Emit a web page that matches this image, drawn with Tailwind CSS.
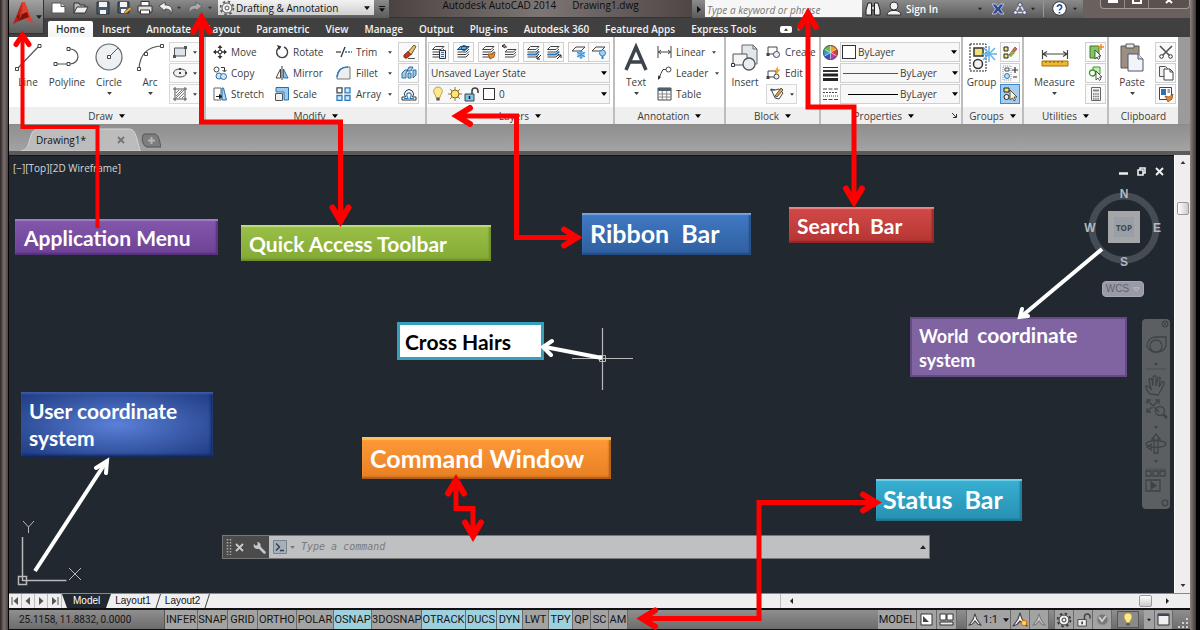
<!DOCTYPE html>
<html lang="en">
<head>
  <meta charset="UTF-8" />
  <meta name="viewport" content="width=device-width, initial-scale=1" />
  <title>Autodesk AutoCAD 2014 - Drawing1.dwg</title>
  <script src="https://cdn.jsdelivr.net/npm/@tailwindcss/browser@4"></script>
</head>
<body class="bg-black text-[#3c3c3c] font-['Open_Sans',sans-serif] text-[10px] leading-4 overflow-hidden">

  <!-- Shared icons -->
  <svg class="hidden">
    <symbol id="caret" viewBox="0 0 8 5"><path d="M0 0h8L4 5z" fill="currentColor" /></symbol>
    <symbol id="stack" viewBox="0 0 16 16"><path d="M4.500 2.500h8.500l-3 3H1.500zM1.500 8h8.500l3-3M1.500 10.500h8.500l3-3M1.500 13h8.500l3-3" fill="none" stroke="currentColor" /></symbol>
    <symbol id="gear" viewBox="0 0 16 16"><circle cx="8" cy="8" r="6.500" fill="none" stroke="currentColor" stroke-width="1.600" stroke-dasharray="2.500 2.600" /><circle cx="8" cy="8" r="5" fill="#f4f4f4" stroke="currentColor" /><circle cx="8" cy="8" r="2" fill="none" stroke="currentColor" /></symbol>
    <symbol id="bulb" viewBox="0 0 12 16"><path d="M6 1a4.300 4.300 0 0 0-4.300 4.300C1.700 8 4 9 4 11.500h4C8 9 10.300 8 10.300 5.300A4.300 4.300 0 0 0 6 1z" fill="#ffe98a" stroke="#a08a3a" stroke-width=".8" /><path d="M4.300 12h3.400v2.500H4.300z" fill="#555" /></symbol>
    <symbol id="lock" viewBox="0 0 16 16"><path d="M9 8V5a3 3 0 0 1 6 0v2" fill="none" stroke="#444" stroke-width="1.600" /><path d="M2 8h9v7H2z" fill="var(--lock,#7cc4ea)" stroke="#444" /><path d="M6.500 10v3" stroke="#222" stroke-width="1.500" /></symbol>
    <symbol id="scaler" viewBox="0 0 16 16"><path d="M8 1l2 6 5 7-4-1.500L8 9l-3 3.500L1 14l5-7z" fill="#fff" stroke="#444" stroke-width="1.200" stroke-linejoin="round" /></symbol>
  </svg>

  <div class="relative min-h-screen flex overflow-hidden">
    <!-- Window frame, left -->
    <div class="w-[9px] shrink-0 border-r border-black bg-linear-to-r from-[#2b2626] via-[#7b706e] to-[#4c4342]"></div>

    <div class="flex-1 min-w-0 flex flex-col">
      <div class="relative">
        <!-- Title bar -->
        <header class="h-[18px] flex bg-linear-to-b from-[#8b8b8b] to-[#5b5b5b] text-white">
          <nav class="flex items-center pl-[42px] w-[209px] h-4 shrink-0">
            <button aria-label="New" class="w-[19px]"><svg class="w-4 h-4" viewBox="0 0 16 16"><path d="M1 3h9l4 3.500V13H1z" fill="#fff" stroke="#555" /><path d="M10 3v3.500h4" fill="#ccc" stroke="#555" /></svg></button>
            <button aria-label="Open" class="w-[22px]"><svg class="w-4 h-4 mx-auto" viewBox="0 0 16 16"><path d="M1 13V3h5l1 2h5v2" fill="#bbb" stroke="#333" /><path d="M1 13l3-6h11l-3 6z" fill="#eee" stroke="#333" /></svg></button>
            <button aria-label="Save" class="w-[21px]"><svg class="w-4 h-4 mx-auto" viewBox="0 0 16 16"><path d="M2 2h12v12H2z" fill="#4a586c" stroke="#26303d" /><path d="M4 2h8v5H4zM5 10h6v4H5z" fill="#f4f4f4" /></svg></button>
            <button aria-label="Save As" class="w-[21px]"><svg class="w-4 h-4 mx-auto" viewBox="0 0 16 16"><path d="M2 2h11v11H2z" fill="#4a586c" stroke="#26303d" /><path d="M4 2h7v5H4zM5 9h5v4H5z" fill="#f4f4f4" /><path d="M8 14l1-3 5-4 1.500 2-5 4z" fill="#f0b040" stroke="#7a4a10" stroke-width=".7" /></svg></button>
            <button aria-label="Plot" class="w-[21px]"><svg class="w-4 h-4 mx-auto" viewBox="0 0 16 16"><path d="M4 1.500h8V6H4z" fill="#fff" stroke="#333" /><path d="M1 6h14v6H1z" fill="#ddd" stroke="#333" /><path d="M3.500 10h9v4h-9z" fill="#fff" stroke="#333" /></svg></button>
            <button aria-label="Undo" class="w-[22px]"><svg class="w-4 h-4 mx-auto" viewBox="0 0 16 16"><path d="M1 6l6-4v3c5 0 7 2 7 6 0 1-.3 2-1 3 0-4-2-5-6-5v2z" fill="#eee" stroke="#333" stroke-width=".7" /></svg></button>
            <svg class="w-1 h-1 text-[#333]"><use href="#caret" /></svg>
            <button aria-label="Redo" class="w-[27px]"><svg class="w-4 h-4 mx-auto" viewBox="0 0 16 16"><path d="M15 6L9 2v3c-5 0-7 2-7 6 0 1 .3 2 1 3 0-4 2-5 6-5v2z" fill="#aaa" stroke="#555" stroke-width=".7" /></svg></button>
            <svg class="w-1 h-1 text-[#333]"><use href="#caret" /></svg>
          </nav>
          <div class="relative flex items-center w-[156px] h-4 shrink-0 bg-linear-to-b from-[#f2f2f2] to-[#cfcfcf] border-b border-[#666] text-[#111]">
            <svg class="w-4 h-4 ml-px mr-px text-[#555] shrink-0"><use href="#gear" /></svg>
            <select aria-label="Workspace" class="appearance-none flex-1 h-4 bg-transparent outline-none"><option>Drafting &amp; Annotation</option></select>
            <svg class="absolute right-1 w-[6px] h-1 pointer-events-none"><use href="#caret" /></svg>
          </div>
          <button aria-label="Customize toolbar" class="w-[15px] shrink-0 flex flex-col items-center justify-center gap-px text-[#111]"><span class="w-[6px] h-px bg-[#111]"></span><svg class="w-[6px] h-1"><use href="#caret" /></svg></button>
          <div class="flex-1 bg-linear-to-r from-[#4a4342] via-[#7d7674] to-[#4f4745] text-[#0c0c0c] leading-[11px] flex justify-center gap-4 border-b border-[#383230]">
            <span>Autodesk AutoCAD 2014</span><span>Drawing1.dwg</span>
          </div>
          <button aria-label="Collapse search" class="w-[13px] shrink-0 flex items-center justify-center text-[#111]"><svg class="w-1 h-[7px]" viewBox="0 0 4 7"><path d="M0 0v7l4-3.500z" fill="currentColor" /></svg></button>
          <input aria-label="Search" type="text" placeholder="Type a keyword or phrase" class="w-[157px] shrink-0 h-[17px] bg-[#f6f6f6] px-[2px] pt-[3px] italic outline-none placeholder:text-[#777]" />
          <div class="flex items-center w-[221px] shrink-0 pl-[3px] h-[17px]">
            <button aria-label="Find" class="w-4"><svg class="w-4 h-4" viewBox="0 0 16 16"><path d="M3 2h3.500v12H1V9zM9.500 2H13l2 7v5H9.500z" fill="#f0f0f0" stroke="#222" /><path d="M6.500 5h3v4h-3z" fill="#ccc" stroke="#222" /></svg></button>
            <button class="flex items-center gap-1 ml-[5px] font-semibold"><svg class="w-4 h-4" viewBox="0 0 16 16"><circle cx="8" cy="5" r="4" fill="#f2f2f2" stroke="#333" /><path d="M1 14c0-3 3-4 5-4.500h4c2 .5 5 1.500 5 4.500z" fill="#f2f2f2" stroke="#333" /></svg>Sign In</button>
            <svg class="w-1 h-1 ml-auto mr-[9px] text-[#222]"><use href="#caret" /></svg>
            <button aria-label="Exchange"><svg class="w-[14px] h-[14px]" viewBox="0 0 14 14"><path d="M1 2h4l2 3 2-3h4L9.500 7 13 12H9L7 9l-2 3H1l3.500-5z" fill="#2f4796" stroke="#cfd6ee" stroke-width=".8" /></svg></button>
            <button aria-label="Autodesk 360" class="ml-2"><svg class="w-[14px] h-[14px]" viewBox="0 0 14 14"><path d="M7 2.500L2.500 10.500h9z" fill="none" stroke="#dfe4f2" stroke-width="1.600" /><g fill="#dfe4f2" stroke="#34406c" stroke-width=".8"><circle cx="7" cy="2.700" r="2" /><circle cx="2.500" cy="10.500" r="2" /><circle cx="11.500" cy="10.500" r="2" /></g></svg></button>
            <svg class="w-1 h-1 ml-1 text-[#222]"><use href="#caret" /></svg>
            <span class="w-px h-4 bg-[#999] mx-2"></span>
            <button aria-label="Help"><svg class="w-[15px] h-[15px]" viewBox="0 0 15 15"><circle cx="7.500" cy="7.500" r="6.800" fill="#fff" stroke="#333" /><path d="M5.300 6a2.200 2.200 0 1 1 3.200 2c-.8.400-1 .8-1 1.500M7.500 11v1.400" fill="none" stroke="#2752a8" stroke-width="1.700" /></svg></button>
            <svg class="w-1 h-1 mx-[6px] text-[#222]"><use href="#caret" /></svg>
          </div>
          <div class="w-[107px] shrink-0 bg-[#6a605d] flex justify-end">
            <div class="flex w-[90px] h-[9px] rounded-b-[4px] border border-t-0 border-[#a39a97] bg-[#5b5250]">
              <button aria-label="Minimize" class="flex-1 flex justify-center"><span class="w-[10px] h-[3px] bg-white"></span></button>
              <button aria-label="Maximize" class="flex-1 flex justify-center border-x border-[#958c89]"><span class="w-[10px] h-1 border-2 border-t-0 border-white"></span></button>
              <button aria-label="Close" class="w-10 flex justify-center"><svg class="w-[10px] h-1" viewBox="0 0 10 4"><path d="M5 0l3 3M5 0L2 3" stroke="#fff" stroke-width="2" /></svg></button>
            </div>
          </div>
        </header>

        <!-- Ribbon tabs -->
        <nav class="h-[19px] bg-[#404040] flex items-end pl-[39px] text-[#f2f2f2] font-semibold">
          <a href="#home" class="h-4 px-2 mr-px bg-linear-to-b from-white to-[#f4f4f4] text-[#333] rounded-t-[2px]">Home</a>
          <a href="#insert" class="h-4 px-2">Insert</a>
          <a href="#annotate" class="h-4 px-2">Annotate</a>
          <a href="#layout" class="h-4 px-2">Layout</a>
          <a href="#parametric" class="h-4 px-2">Parametric</a>
          <a href="#view" class="h-4 px-2">View</a>
          <a href="#manage" class="h-4 px-2">Manage</a>
          <a href="#output" class="h-4 px-2">Output</a>
          <a href="#plugins" class="h-4 px-2">Plug-ins</a>
          <a href="#a360" class="h-4 px-2">Autodesk 360</a>
          <a href="#featured" class="h-4 px-2">Featured Apps</a>
          <a href="#express" class="h-4 px-2">Express Tools</a>
          <button aria-label="Minimize ribbon" class="h-4 ml-4 flex items-center gap-[5px]"><span class="w-3 h-[7px] rounded-[2px] bg-white text-[#222] flex items-center justify-center"><svg class="w-1 h-[3px] rotate-180"><use href="#caret" /></svg></span><svg class="w-1 h-[3px]"><use href="#caret" /></svg></button>
        </nav>

        <!-- Application button -->
        <button aria-label="Application menu" class="absolute left-0 top-0 w-[35px] h-[34px] bg-linear-to-b from-[#a2a2a2] to-[#5c5c5c] border-r border-b border-[#333] flex items-center gap-[2px] pl-[3px] text-[#222]">
          <svg class="w-[22px] h-6 -mt-2 shrink-0" viewBox="0 0 22 24"><path d="M10 1L1 23l6-3 3-6z" fill="#b02318" /><path d="M10 1h3l8 21-6-2-5-12z" fill="#e0402c" /><path d="M5 15l10-4 2 5-10 4z" fill="#7c130c" /><path d="M10 1l1 10-4 9z" fill="#d5301f" /></svg>
          <svg class="w-[6px] h-1"><use href="#caret" /></svg>
        </button>
      </div>

      <!-- Ribbon panels -->
      <section class="h-[88px] flex bg-[#9b9b9b] border-b border-[#8b8b8b]">
        <!-- Draw -->
        <div class="w-[197px] shrink-0 flex flex-col bg-white border-r-2 border-[#bdbdbd]">
          <div class="flex-1 flex pt-[5px]">
            <button class="w-[38px] flex flex-col items-center"><svg class="w-[30px] h-8" viewBox="0 0 30 32"><path d="M4 27L26 4" stroke="#555" stroke-width="1.200" /><path d="M2.500 25.500h3v3h-3zM25 2.500h3v3h-3z" fill="#fff" stroke="#444" /></svg>Line</button>
            <button class="w-10 flex flex-col items-center"><svg class="w-[30px] h-8" viewBox="0 0 30 32"><path d="M3 22h15a8 7.500 0 0 0 0-15h-1" fill="none" stroke="#555" stroke-width="1.200" /><path d="M2 20.500h3v3H2zM15 20.500h3v3h-3zM15 5.500h3v3h-3z" fill="#fff" stroke="#444" /></svg>Polyline</button>
            <button class="w-11 flex flex-col items-center"><svg class="w-[30px] h-8" viewBox="0 0 30 32"><circle cx="15" cy="15" r="13" fill="#eef1f4" stroke="#666" stroke-width="1.200" /><path d="M15 15l9-9" stroke="#555" /><path d="M13.500 13.500h3v3h-3z" fill="#fff" stroke="#444" /></svg>Circle<svg class="w-[5px] h-[3px] mt-[2px]"><use href="#caret" /></svg></button>
            <button class="w-[38px] flex flex-col items-center"><svg class="w-[30px] h-8" viewBox="0 0 30 32"><path d="M4 27Q5 5 27 4" fill="none" stroke="#555" stroke-width="1.200" /><path d="M2.500 25.500h3v3h-3zM9.500 10.500h3v3h-3zM25.500 2.500h3v3h-3z" fill="#fff" stroke="#444" /></svg>Arc<svg class="w-[5px] h-[3px] mt-[2px]"><use href="#caret" /></svg></button>
            <div class="flex flex-col gap-px">
              <button aria-label="Rectangle" class="w-[31px] h-5 border border-[#d8d8d8] bg-[#fafafa] flex items-center gap-[5px] pl-[2px]"><svg class="w-4 h-4" viewBox="0 0 16 16"><path d="M2.500 4h11v8h-11z" fill="#dde3ea" stroke="#555" /><path d="M1 11h3v3H1zM12 2h3v3h-3z" fill="#555" /></svg><svg class="w-1 h-[3px]"><use href="#caret" /></svg></button>
              <button aria-label="Ellipse" class="w-[31px] h-5 border border-[#d8d8d8] bg-[#fafafa] flex items-center gap-[5px] pl-[2px]"><svg class="w-4 h-4" viewBox="0 0 16 16"><ellipse cx="8" cy="8" rx="6.500" ry="4" fill="#f0f0f0" stroke="#444" /><path d="M7 7h2v2H7zM7 3h2v2H7zM13 7h2v2h-2z" fill="#444" /></svg><svg class="w-1 h-[3px]"><use href="#caret" /></svg></button>
              <button aria-label="Hatch" class="w-[31px] h-5 border border-[#d8d8d8] bg-[#fafafa] flex items-center gap-[5px] pl-[2px]"><svg class="w-4 h-4" viewBox="0 0 16 16"><path d="M3 1v14M13 1v14M1 3h14M1 13h14" stroke="#555" /><path d="M4 7l3-3M4 10l6-6M4 12l8-8M7 12l5-5M10 12l2-2" stroke="#666" stroke-width=".9" /></svg><svg class="w-1 h-[3px]"><use href="#caret" /></svg></button>
            </div>
          </div>
          <button class="h-[17px] bg-[#efefef] flex items-center justify-center gap-[6px]">Draw <svg class="w-[6px] h-1 text-black"><use href="#caret" /></svg></button>
        </div>

        <!-- Modify -->
        <div class="w-[221px] shrink-0 flex flex-col bg-white border-r-2 border-[#bdbdbd]">
          <div class="flex-1 flex pt-[5px] pl-[7px]">
            <div class="w-[62px] flex flex-col gap-px">
              <button class="h-5 flex items-center gap-1"><svg class="w-[14px] h-[14px]" viewBox="0 0 14 14"><path d="M7 1v4M7 9v4M1 7h4M9 7h4" stroke="#333" stroke-width="1.300" /><path d="M7 0l2.500 3h-5zM7 14l2.500-3h-5zM0 7l3-2.500v5zM14 7l-3-2.500v5z" fill="#333" /><path d="M5.500 5.500h3v3h-3z" fill="#fff" stroke="#444" /></svg>Move</button>
              <button class="h-5 flex items-center gap-1"><svg class="w-[14px] h-[14px]" viewBox="0 0 14 14"><circle cx="3.500" cy="3.500" r="2.500" fill="#fff" stroke="#444" /><circle cx="6" cy="10" r="3" fill="#cfe6f8" stroke="#2a6ea8" /><circle cx="10.500" cy="10.500" r="3" fill="#cfe6f8" stroke="#2a6ea8" /><path d="M8 1.500h3.500V5M9.500 4l2 2 2-2" fill="none" stroke="#333" /></svg>Copy</button>
              <button class="h-5 flex items-center gap-1"><svg class="w-[14px] h-[14px]" viewBox="0 0 14 14"><path d="M9 1h1.500l3 12H9z" fill="#a9d4f2" stroke="#2a6ea8" /><path d="M1 1h7v12H1z" fill="#fff" stroke="#666" /><path d="M3 9.500h4M6.500 7.500l2.500 2-2.500 2z" fill="#222" stroke="#222" /></svg>Stretch</button>
            </div>
            <div class="w-[61px] flex flex-col gap-px">
              <button class="h-5 flex items-center gap-1"><svg class="w-[14px] h-[14px]" viewBox="0 0 14 14"><path d="M4.500 2.300A5.500 5.500 0 1 0 9 2" fill="none" stroke="#444" stroke-width="1.400" /><path d="M2 0l4.500 1.500L4 5z" fill="#333" /></svg>Rotate</button>
              <button class="h-5 flex items-center gap-1"><svg class="w-[14px] h-[14px]" viewBox="0 0 14 14"><path d="M5.500 3v9H1z" fill="#fff" stroke="#444" /><path d="M8.500 3v9H13z" fill="#8fc4ec" stroke="#2a6ea8" /><path d="M7 0v14" stroke="#333" /></svg>Mirror</button>
              <button class="h-5 flex items-center gap-1"><svg class="w-[14px] h-[14px]" viewBox="0 0 14 14"><path d="M1 .5h12.500V13H9V5H1z" fill="#9acbee" stroke="#2a6ea8" /><path d="M.5 6.500h7v7h-7z" fill="#eee" stroke="#555" /></svg>Scale</button>
            </div>
            <div class="w-[62px] flex flex-col gap-px">
              <button class="h-5 flex items-center gap-1"><svg class="w-4 h-[14px]" viewBox="0 0 16 14"><path d="M0 7h5" stroke="#444" stroke-width="1.300" /><path d="M9 2L5 12" stroke="#333" stroke-width="1.300" /><path d="M9 7h7" stroke="#2a6ea8" stroke-width="1.300" stroke-dasharray="2 1" /></svg>Trim<svg class="w-1 h-[3px] ml-auto mr-[6px]"><use href="#caret" /></svg></button>
              <button class="h-5 flex items-center gap-1"><svg class="w-4 h-[14px]" viewBox="0 0 16 14"><path d="M1 13V10Q2 1 12 1h2v12z" fill="#eee" stroke="#777" /><path d="M1 11Q2 1 12 1" fill="none" stroke="#2a7bc0" stroke-width="1.600" /></svg>Fillet<svg class="w-1 h-[3px] ml-auto mr-[6px]"><use href="#caret" /></svg></button>
              <button class="h-5 flex items-center gap-1"><svg class="w-4 h-[14px]" viewBox="0 0 16 14"><path d="M1 .8h5v5H1z" fill="#fff" stroke="#444" stroke-width="1.300" /><path d="M9 .8h5v5H9zM1 8.500h5v5H1zM9 8.500h5v5H9z" fill="#d3e9f9" stroke="#2a7bc0" stroke-width="1.300" /></svg>Array<svg class="w-1 h-[3px] ml-auto mr-[6px]"><use href="#caret" /></svg></button>
            </div>
            <div class="flex flex-col gap-px">
              <button aria-label="Erase" class="w-[21px] h-5 border border-[#d0d0d0] bg-[#fafafa] flex items-center justify-center"><svg class="w-4 h-4" viewBox="0 0 16 16"><path d="M7 8l6-7 2 1.500L10 11z" fill="#f3c064" stroke="#333" stroke-width=".8" /><path d="M3 11l4-3.500 3 3L6 14c-2 1-4-1-3-3z" fill="#c2391f" stroke="#5b1608" stroke-width=".7" /><path d="M7 14.500h7" stroke="#555" /></svg></button>
              <button aria-label="Explode" class="w-[21px] h-5 border border-[#d0d0d0] bg-[#fafafa] flex items-center justify-center"><svg class="w-4 h-4" viewBox="0 0 16 16"><g fill="#9ccdf0" stroke="#22628f" stroke-width=".9"><path d="M1 8l3-3h3L5 8v5H1zM6 6l2-4h4L10 6zM7 8h3v5H7zM12 5h3v5l-3 3z" /></g></svg></button>
              <button aria-label="Offset" class="w-[21px] h-5 border border-[#d0d0d0] bg-[#fafafa] flex items-center justify-center"><svg class="w-4 h-4" viewBox="0 0 16 16"><path d="M1 14h14v-3h-3.500a4.500 4.500 0 1 0-7 0H1z" fill="#fff" stroke="#333" /><path d="M3 12.500h4c0-1-1.500-2-1.200-3.500a2.200 2.200 0 0 1 4.400 0c.3 1.500-1.200 2.500-1.200 3.500h4" fill="none" stroke="#2a7bc0" stroke-width="1.200" /></svg></button>
            </div>
          </div>
          <button class="h-[17px] bg-[#efefef] flex items-center justify-center gap-[6px]">Modify <svg class="w-[6px] h-1 text-black"><use href="#caret" /></svg></button>
        </div>

        <!-- Layers -->
        <div class="w-[188px] shrink-0 flex flex-col bg-white border-r-2 border-[#bdbdbd]">
          <div class="flex-1 flex flex-col gap-px pt-[5px] pl-px pr-[3px]">
            <div class="flex justify-between h-5 text-[#444]">
              <button aria-label="Layer properties" class="w-[21px] border border-[#d0d0d0] bg-[#fafafa] flex items-center justify-center"><svg class="w-4 h-4" viewBox="0 0 16 16"><use href="#stack" /><path d="M8.500 6.500h6v8h-6z" fill="#e8eef4" stroke="#333" /><path d="M10 8.500h3M10 10.500h3M10 12.500h3" stroke="#2a6ea8" /></svg></button>
              <button aria-label="Make current" class="w-[21px] border border-[#d0d0d0] bg-[#fafafa] flex items-center justify-center"><svg class="w-4 h-4" viewBox="0 0 16 16"><use href="#stack" /><path d="M4.500 2.500H13l-3 3H1.500z" fill="#62aee4" stroke="#1d4d75" /><circle cx="8" cy="4" r="2.500" fill="none" stroke="#1d4d75" /></svg></button>
              <div class="flex">
                <button aria-label="Match layer" class="w-[21px] border border-[#d0d0d0] bg-[#fafafa] flex items-center justify-center"><svg class="w-4 h-4" viewBox="0 0 16 16"><use href="#stack" /><path d="M7 10h4l3-2-1 5-4 2z" fill="#e48a2c" stroke="#8a4510" stroke-width=".8" /></svg></button>
                <button aria-label="Previous layer" class="w-5 border border-l-0 border-[#d0d0d0] bg-[#fafafa] flex items-center justify-center"><svg class="w-4 h-4" viewBox="0 0 16 16"><path d="M1 2h4v2M1 2l3-2M1 2l3 2" fill="none" stroke="#222" /><path d="M6.500 5.500H15l-2.500 2.500H4zM4 10.500h8.500L15 8M4 13h8.500l2.500-2.500" fill="none" stroke="#444" /></svg></button>
              </div>
              <div class="flex">
                <button aria-label="Isolate" class="w-[21px] border border-[#d0d0d0] bg-[#fafafa] flex items-center justify-center"><svg class="w-4 h-4" viewBox="0 0 16 16"><use href="#stack" /><path d="M1.500 10.500h8.500l3-3" stroke="#2a7bc0" stroke-width="1.800" fill="none" /><path d="M15 11l-4 4M11 12v3h3" stroke="#222" fill="none" /></svg></button>
                <button aria-label="Unisolate" class="w-5 border border-l-0 border-[#d0d0d0] bg-[#fafafa] flex items-center justify-center"><svg class="w-4 h-4" viewBox="0 0 16 16"><use href="#stack" /><path d="M1.500 10.500h8.500l3-3" stroke="#2a7bc0" stroke-width="1.800" fill="none" /><path d="M11 15l4-4M12 11h3v3" stroke="#222" fill="none" /></svg></button>
              </div>
              <div class="flex">
                <button aria-label="Freeze" class="w-[21px] border border-[#d0d0d0] bg-[#fafafa] flex items-center justify-center"><svg class="w-4 h-4" viewBox="0 0 16 16"><path d="M5 3h9l-4 4H1z" fill="none" stroke="#444" /><path d="M10 6v9M6 8.300l8 4.500M14 8.300l-8 4.500" stroke="#3b95d8" stroke-width="1.200" /><circle cx="10" cy="10.500" r="3" fill="none" stroke="#3b95d8" /></svg></button>
                <button aria-label="Layer off" class="w-[21px] border border-l-0 border-[#d0d0d0] bg-[#fafafa] flex items-center justify-center"><svg class="w-4 h-4" viewBox="0 0 16 16"><path d="M5 3h9l-4 4H1z" fill="none" stroke="#444" /><circle cx="11.500" cy="9" r="3" fill="#9fd0f2" stroke="#3b7fb5" /><path d="M10.500 12h2v3h-2z" fill="#3b7fb5" /></svg></button>
              </div>
            </div>
            <div class="relative flex items-center h-5 border border-[#cfcfcf] bg-[#f7f7f7]">
              <select aria-label="Layer state" class="appearance-none flex-1 bg-transparent pl-[2px] outline-none"><option>Unsaved Layer State</option></select>
              <svg class="absolute right-[2px] w-[6px] h-1 text-black pointer-events-none"><use href="#caret" /></svg>
            </div>
            <div class="relative flex items-center h-5 border border-[#cfcfcf] bg-[#f7f7f7]">
              <svg class="w-3 h-4 ml-[3px]"><use href="#bulb" /></svg>
              <svg class="w-4 h-4 ml-[3px]" viewBox="0 0 16 16"><path d="M8 1v14M1 8h14M3 3l10 10M13 3L3 13" stroke="#a07d28" /><circle cx="8" cy="8" r="4" fill="#ffe27a" stroke="#8a6a1a" /></svg>
              <svg class="w-4 h-4"><use href="#lock" /></svg>
              <span class="w-3 h-3 ml-1 mr-1 border border-[#333] bg-white"></span>
              <select aria-label="Layer" class="appearance-none flex-1 bg-transparent outline-none"><option>0</option></select>
              <svg class="absolute right-[2px] w-[6px] h-1 text-black pointer-events-none"><use href="#caret" /></svg>
            </div>
          </div>
          <button class="h-[17px] bg-[#efefef] flex items-center justify-center gap-[6px]">Layers <svg class="w-[6px] h-1 text-black"><use href="#caret" /></svg></button>
        </div>

        <!-- Annotation -->
        <div class="w-[111px] shrink-0 flex flex-col bg-white border-r-2 border-[#bdbdbd]">
          <div class="flex-1 flex pt-[5px]">
            <button class="w-[42px] flex flex-col items-center"><svg class="w-6 h-8" viewBox="0 0 24 32"><path d="M2 28L12 5l10 23M6 20h12" fill="none" stroke="#3e444c" stroke-width="3.500" /></svg>Text<svg class="w-[5px] h-[3px] mt-[2px]"><use href="#caret" /></svg></button>
            <div class="flex-1 flex flex-col gap-px">
              <button class="h-5 flex items-center gap-1"><svg class="w-[15px] h-[14px]" viewBox="0 0 15 14"><path d="M1 1v12M14 1v12M1 7h13M4 5L1.500 7 4 9M11 5l2.500 2L11 9" fill="none" stroke="#444" /></svg>Linear<svg class="w-1 h-[3px] ml-auto mr-2"><use href="#caret" /></svg></button>
              <button class="h-5 flex items-center gap-1"><svg class="w-[15px] h-[14px]" viewBox="0 0 15 14"><circle cx="11.500" cy="3.500" r="2.500" fill="#fff" stroke="#444" /><path d="M9 3.500H6Q4 7 1.500 13" fill="none" stroke="#444" /><path d="M1 14l.3-4.500L4 11z" fill="#222" /></svg>Leader<svg class="w-1 h-[3px] ml-auto mr-[5px]"><use href="#caret" /></svg></button>
              <button class="h-5 flex items-center gap-1"><svg class="w-[15px] h-[14px]" viewBox="0 0 15 14"><path d="M1 1h13v12H1z" fill="#fff" stroke="#444" /><path d="M1 1h13v3H1z" fill="#51606f" /><path d="M5.300 4v9M9.700 4v9M1 7h13M1 10h13" stroke="#888" /></svg>Table</button>
            </div>
          </div>
          <button class="h-[17px] bg-[#efefef] flex items-center justify-center gap-[6px]">Annotation <svg class="w-[6px] h-1 text-black"><use href="#caret" /></svg></button>
        </div>

        <!-- Block -->
        <div class="w-[95px] shrink-0 flex flex-col bg-white border-r-2 border-[#bdbdbd]">
          <div class="flex-1 flex pt-[5px]">
            <button class="w-[38px] flex flex-col items-center"><svg class="w-7 h-8" viewBox="0 0 28 32"><path d="M11 3h11l4 4v15H11z" fill="#e2e7ec" stroke="#666" /><path d="M22 3v4h4" fill="none" stroke="#666" /><path d="M2 12h14v11H2z" fill="#f3f5f7" stroke="#555" /><circle cx="18" cy="22" r="6" fill="#e8edf2" stroke="#555" stroke-width="1.300" /><path d="M.5 21.500h3v3h-3z" fill="#fff" stroke="#333" /></svg>Insert</button>
            <div class="flex flex-col gap-px pl-[2px]">
              <button class="h-5 flex items-center gap-1"><svg class="w-[15px] h-[14px]" viewBox="0 0 15 14"><path d="M2 2h9v7H2z" fill="#fff" stroke="#444" /><circle cx="10.500" cy="9.500" r="3" fill="#eef" stroke="#444" /><path d="M.5 8h3v3h-3z" fill="#444" /></svg>Create</button>
              <button class="h-5 flex items-center gap-1"><svg class="w-[15px] h-[14px]" viewBox="0 0 15 14"><path d="M2 5h8v6H2z" fill="#fff" stroke="#444" /><circle cx="10.500" cy="10.500" r="2.500" fill="#eef" stroke="#444" /><path d="M.5 10h3v3h-3z" fill="#444" /><path d="M12 0L8.500 5H11l-1 4 4.500-5.500H12z" fill="#f6a623" /></svg>Edit</button>
              <button aria-label="Edit attributes" class="w-[31px] h-5 border border-[#d8d8d8] bg-[#fafafa] flex items-center gap-[5px] pl-[2px]"><svg class="w-4 h-4" viewBox="0 0 16 16"><path d="M2 3l4 9 4 1 4-6-4-4-4 1z" fill="#fff" stroke="#444" /><path d="M1 4h5" stroke="#444" /><path d="M6 10l6-8 2 2-6 7z" fill="#f2a33c" stroke="#333" stroke-width=".8" /></svg><svg class="w-1 h-[3px]"><use href="#caret" /></svg></button>
            </div>
          </div>
          <button class="h-[17px] bg-[#efefef] flex items-center justify-center gap-[6px]">Block <svg class="w-[6px] h-1 text-black"><use href="#caret" /></svg></button>
        </div>

        <!-- Properties -->
        <div class="w-[142px] shrink-0 flex flex-col bg-white border-r-2 border-[#bdbdbd]">
          <div class="flex-1 flex flex-col gap-px pt-[5px] pl-[2px] pr-px">
            <div class="h-5 flex items-center gap-[2px]">
              <svg class="w-[15px] h-[15px]" viewBox="0 0 16 16"><g stroke="#fff" stroke-width=".4"><path d="M8 8V0a8 8 0 0 1 7 4z" fill="#f0a030" /><path d="M8 8l7-4a8 8 0 0 1 0 8z" fill="#e2402e" /><path d="M8 8l7 4a8 8 0 0 1-7 4z" fill="#b13bb0" /><path d="M8 8v8a8 8 0 0 1-7-4z" fill="#3b4fc8" /><path d="M8 8l-7 4a8 8 0 0 1 0-8z" fill="#2ba3c4" /><path d="M8 8L1 4a8 8 0 0 1 7-4z" fill="#6cbb3c" /></g><circle cx="8" cy="8" r="7.500" fill="none" stroke="#444" /></svg>
              <div class="relative flex-1 h-full flex items-center border border-[#cfcfcf] bg-[#f7f7f7]"><span class="w-[14px] h-[14px] ml-px mr-[2px] border border-[#333] bg-white"></span><select aria-label="Object color" class="appearance-none flex-1 bg-transparent outline-none"><option>ByLayer</option></select><svg class="absolute right-[2px] w-[6px] h-1 text-black pointer-events-none"><use href="#caret" /></svg></div>
            </div>
            <div class="h-5 flex items-center gap-[2px]">
              <svg class="w-[15px] h-[15px]" viewBox="0 0 15 15"><path d="M0 1.500h15" stroke="#333" /><path d="M0 5h15" stroke="#333" stroke-width="2" /><path d="M0 9h15M0 13.500h15" stroke="#222" stroke-width="3" /></svg>
              <div class="relative flex-1 h-full flex items-center border border-[#cfcfcf] bg-[#f7f7f7]"><span class="flex-1 h-px ml-[2px] mr-[2px] bg-[#555]"></span><select aria-label="Lineweight" class="appearance-none w-[59px] bg-transparent outline-none"><option>ByLayer</option></select><svg class="absolute right-px w-[6px] h-1 text-black pointer-events-none"><use href="#caret" /></svg></div>
            </div>
            <div class="h-5 flex items-center gap-[2px]">
              <svg class="w-[15px] h-[15px]" viewBox="0 0 15 15"><path d="M0 2h15M0 12.500h15" stroke="#444" stroke-dasharray="4 1.500" /><path d="M0 5.500h15" stroke="#444" stroke-dasharray="2 1" /><path d="M0 9h15" stroke="#444" stroke-dasharray="1 1" /></svg>
              <div class="relative flex-1 h-full flex items-center border border-[#cfcfcf] bg-[#f7f7f7]"><span class="flex-1 h-px ml-[7px] mr-[2px] bg-black"></span><select aria-label="Linetype" class="appearance-none w-[59px] bg-transparent outline-none"><option>ByLayer</option></select><svg class="absolute right-px w-[6px] h-1 text-black pointer-events-none"><use href="#caret" /></svg></div>
            </div>
          </div>
          <div class="h-[17px] bg-[#efefef] flex items-center justify-end gap-[38px] pr-1"><button class="flex items-center gap-[6px]">Properties <svg class="w-[6px] h-1 text-black"><use href="#caret" /></svg></button><button aria-label="Properties palette"><svg class="w-[5px] h-[5px]" viewBox="0 0 5 5"><path d="M0 0l4 4M4.500 1v3.500H1" fill="none" stroke="#333" /></svg></button></div>
        </div>

        <!-- Groups -->
        <div class="w-[61px] shrink-0 flex flex-col bg-white border-r-2 border-[#bdbdbd]">
          <div class="flex-1 flex pt-[5px]">
            <button class="w-[37px] flex flex-col items-center"><svg class="w-8 h-8" viewBox="0 0 32 32"><path d="M4 2h16v27H4z" fill="#fff" stroke="#222" stroke-dasharray="2 1" /><path d="M8 6h9v8H8z" fill="#f0e07a" stroke="#333" stroke-width="1.500" /><circle cx="12" cy="22" r="4.500" fill="#f2f2f2" stroke="#333" stroke-width="1.500" /><path d="M23 4v16M15 12h16M18 6l11 12M29 6L17 18" stroke="#5fb6ee" stroke-width="1.500" /></svg>Group</button>
            <div class="flex flex-col gap-px">
              <button aria-label="Ungroup" class="w-5 h-5 border border-[#d0d0d0] bg-[#fafafa] flex items-center justify-center"><svg class="w-4 h-4" viewBox="0 0 16 16"><path d="M2 3h4v4H2zM2 10h4v4H2z" fill="#f0e07a" stroke="#222" /><path d="M7 11l6-8 2 2-6 7z" fill="#e5603a" stroke="#555" stroke-width=".7" /><path d="M7 12l3-5 3 2-4 4z" fill="#93b33b" /></svg></button>
              <button aria-label="Group edit" class="w-5 h-5 border border-[#d0d0d0] bg-[#fafafa] flex items-center justify-center"><svg class="w-4 h-4" viewBox="0 0 16 16"><path d="M1 1h8v14H1z" fill="none" stroke="#999" stroke-dasharray="1 1" /><path d="M3 3h4v3H3z" fill="#eee" stroke="#555" /><circle cx="5" cy="11" r="2.500" fill="#bfe0f6" stroke="#2a7bc0" /><path d="M13 2v6M10 5h6M11 12h4" stroke="#333" stroke-width="1.200" /></svg></button>
              <button aria-label="Group selection" class="w-5 h-5 border border-[#3a8ad0] bg-[#a5cdf2] flex items-center justify-center"><svg class="w-4 h-4" viewBox="0 0 16 16"><path d="M2 2h5v4H2z" fill="#f0e07a" stroke="#222" /><circle cx="4.500" cy="11" r="2.500" fill="#eee" stroke="#222" /><path d="M8 4v10l2.500-2 1.500 3 1.500-1-1.500-3h3z" fill="#fff6c8" stroke="#333" stroke-width=".8" /></svg></button>
            </div>
          </div>
          <button class="h-[17px] bg-[#efefef] flex items-center justify-center gap-[6px]">Groups <svg class="w-[6px] h-1 text-black"><use href="#caret" /></svg></button>
        </div>

        <!-- Utilities -->
        <div class="w-[85px] shrink-0 flex flex-col bg-white border-r-2 border-[#bdbdbd]">
          <div class="flex-1 flex pt-[5px]">
            <button class="w-[61px] flex flex-col items-center"><svg class="w-7 h-8" viewBox="0 0 28 32"><path d="M1.500 8v9M26.500 8v9M2 12h24M6 9.500L2 12l4 2.500M22 9.500l4 2.500-4 2.500" fill="none" stroke="#444" stroke-width="1.200" /><path d="M1 19h26v5H1z" fill="#f3b62e" stroke="#a0700e" /><path d="M5 19v2M9 19v2M13 19v2M17 19v2M21 19v2" stroke="#7a5208" /></svg>Measure<svg class="w-[5px] h-[3px] mt-[2px]"><use href="#caret" /></svg></button>
            <div class="flex flex-col gap-px">
              <button aria-label="Select all" class="w-[21px] h-5 border border-[#d0d0d0] bg-[#fafafa] flex items-center justify-center"><svg class="w-4 h-4" viewBox="0 0 16 16"><path d="M2 2h9v12H2z" fill="#86c463" stroke="#3d7a22" /><path d="M7 6v9l2-2 1.500 2.500L12 14l-1.500-2H13z" fill="#fff" stroke="#333" stroke-width=".8" /><path d="M13 0v6M10 3h6" stroke="#f08a24" stroke-width="1.500" /></svg></button>
              <button aria-label="Quick select" class="w-[21px] h-5 border border-[#d0d0d0] bg-[#fafafa] flex items-center justify-center"><svg class="w-4 h-4" viewBox="0 0 16 16"><path d="M5 2h7v7H5z" fill="#cfe9bf" stroke="#3d9a22" /><circle cx="4.500" cy="8" r="3" fill="#fff" stroke="#3d9a22" stroke-width="1.300" /><path d="M8 6v9l2-2 1.500 2.500L13 14l-1.500-2H14z" fill="#fff" stroke="#333" stroke-width=".8" /></svg></button>
              <button aria-label="Calculator" class="w-[21px] h-5 border border-[#d0d0d0] bg-[#fafafa] flex items-center justify-center"><svg class="w-4 h-4" viewBox="0 0 16 16"><path d="M3.500 1.500h9v13h-9z" fill="#f4f4f4" stroke="#666" /><path d="M5 3.500h6v2H5z" fill="#888" /><path d="M5 8h6M5 10.500h6M5 13h6" stroke="#777" stroke-width="1.500" stroke-dasharray="1.500 .7" /></svg></button>
            </div>
          </div>
          <button class="h-[17px] bg-[#efefef] flex items-center justify-center gap-[6px]">Utilities <svg class="w-[6px] h-1 text-black"><use href="#caret" /></svg></button>
        </div>

        <!-- Clipboard -->
        <div class="w-[69px] shrink-0 flex flex-col bg-white">
          <div class="flex-1 flex pt-[5px]">
            <button class="w-[46px] flex flex-col items-center"><svg class="w-7 h-8" viewBox="0 0 28 32"><path d="M3 4h18v22H3z" fill="#9b8f83" stroke="#5e554d" /><path d="M8 2h8v4H8z" fill="#e8e8e8" stroke="#555" /><path d="M10 12h10l5 5v12H10z" fill="#f1f4f9" stroke="#556" /><path d="M20 12v5h5" fill="#d5dbe6" stroke="#556" /></svg>Paste<svg class="w-[5px] h-[3px] mt-[2px]"><use href="#caret" /></svg></button>
            <div class="flex flex-col gap-px">
              <button aria-label="Cut" class="w-[21px] h-5 border border-[#d0d0d0] bg-[#fafafa] flex items-center justify-center"><svg class="w-4 h-4" viewBox="0 0 16 16"><path d="M2 2l9.500 9.500M14 2L4.500 11.500" stroke="#555" stroke-width="1.600" /><circle cx="3.500" cy="12.500" r="1.800" fill="#fff" stroke="#333" /><circle cx="12.500" cy="12.500" r="1.800" fill="#fff" stroke="#333" /></svg></button>
              <button aria-label="Copy clip" class="w-[21px] h-5 border border-[#d0d0d0] bg-[#fafafa] flex items-center justify-center"><svg class="w-4 h-4" viewBox="0 0 16 16"><path d="M1.500 1.500h6l2 2v8h-8z" fill="#eee" stroke="#555" /><path d="M6 4h6l3 3v8H6z" fill="#fff" stroke="#444" /><path d="M12 4v3h3" fill="none" stroke="#444" /></svg></button>
              <button aria-label="Match properties" class="w-[21px] h-5 border border-[#d0d0d0] bg-[#fafafa] flex items-center justify-center"><svg class="w-4 h-4" viewBox="0 0 16 16"><path d="M1.500 1.500h12v12h-12z" fill="#fff" stroke="#445" /><path d="M3 3h5v6H3z" fill="#2f6fb0" /><path d="M9.500 4H12M9.500 6H12" stroke="#445" /><path d="M7 10l4 1 4-3-1 5-4 3z" fill="#e48a2c" stroke="#8a4510" stroke-width=".7" /></svg></button>
            </div>
          </div>
          <div class="h-[17px] bg-[#efefef] flex items-center justify-center">Clipboard</div>
        </div>
      </section>

      <!-- File tabs -->
      <nav class="h-[30px] bg-linear-to-b from-[#8f8f8f] to-[#a3a3a3] border-b-4 border-[#5b5b5b] flex items-end pl-3">
        <div class="relative w-[120px] h-[23px]">
          <svg class="absolute inset-0 w-full h-full" viewBox="0 0 120 23" preserveAspectRatio="none"><path d="M0 23c6-1 7-5 9-12 2-8 4-10 9-10h90c5 0 6 4 8 10s2 11 4 12z" fill="#bcbcbc" stroke="#d6d6d6" /></svg>
          <div class="relative flex items-center justify-between h-full pl-[15px] pr-4 text-[#111]"><a href="#drawing1">Drawing1*</a><button aria-label="Close drawing"><svg class="w-2 h-2" viewBox="0 0 8 8"><path d="M1 1l6 6M7 1L1 7" stroke="#777" stroke-width="2" /></svg></button></div>
        </div>
        <button aria-label="New drawing" class="mb-[3px]"><svg class="w-5 h-[15px]" viewBox="0 0 20 15"><path d="M3 1h11c4 1 5 9 6 13H6C1 13 0 3 3 1z" fill="#7d7d7d" stroke="#555" /><path d="M10.500 4v7M7 7.500h7" stroke="#b5b5b5" stroke-width="2" /></svg></button>
      </nav>

      <!-- Drawing area -->
      <div class="flex-1 flex bg-[#212830]">
        <main class="flex-1 flex justify-between text-[#d8d8d8] pt-1 pl-1 border-t border-[#10161c]">
          <p>[−][Top][2D Wireframe]</p>
          <div class="flex gap-[9px] pt-1 pr-[10px] h-[18px] items-center">
            <button aria-label="Minimize drawing"><svg class="w-[9px] h-[9px]" viewBox="0 0 9 9"><path d="M0 6.500h9" stroke="#eee" stroke-width="2.500" /></svg></button>
            <button aria-label="Restore drawing"><svg class="w-[9px] h-[9px]" viewBox="0 0 9 9"><path d="M3 2.500V1h5v5H6.500M1 3h5v5H1z" fill="none" stroke="#eee" stroke-width="1.600" /></svg></button>
            <button aria-label="Close drawing window"><svg class="w-[9px] h-[9px]" viewBox="0 0 9 9"><path d="M1 1l7 7M8 1L1 8" stroke="#eee" stroke-width="2" /></svg></button>
          </div>
        </main>
        <div class="w-4 bg-[#eeeeee] border-l border-white flex flex-col items-center text-[#333] py-[6px]">
          <svg class="w-[6px] h-[3px] rotate-180"><use href="#caret" /></svg>
          <span class="mt-[38px] w-3 h-[13px] rounded-[2px] border border-[#999] bg-linear-to-r from-white to-[#ccc]"></span>
          <svg class="w-[6px] h-[3px] mt-auto"><use href="#caret" /></svg>
        </div>
      </div>

      <!-- Layout tabs and scroll bar -->
      <nav class="h-[15px] bg-[#efefef] border-t border-[#888] flex items-center text-[#111] font-['Liberation_Sans',sans-serif] leading-[14px]">
        <div class="flex h-full text-[#555]">
          <button aria-label="First" class="w-[13px] border-r border-[#bbb] flex items-center justify-center"><svg class="w-2 h-2" viewBox="0 0 8 8"><path d="M1 0v8" stroke="currentColor" /><path d="M7 0v8L2.500 4z" fill="currentColor" /></svg></button>
          <button aria-label="Previous" class="w-[13px] border-r border-[#bbb] flex items-center justify-center"><svg class="w-2 h-2" viewBox="0 0 8 8"><path d="M6 0v8L1.500 4z" fill="currentColor" /></svg></button>
          <button aria-label="Next" class="w-[13px] border-r border-[#bbb] flex items-center justify-center"><svg class="w-2 h-2" viewBox="0 0 8 8"><path d="M2 0v8l4.500-4z" fill="currentColor" /></svg></button>
          <button aria-label="Last" class="w-[14px] border-r border-[#bbb] flex items-center justify-center"><svg class="w-2 h-2" viewBox="0 0 8 8"><path d="M7 0v8" stroke="currentColor" /><path d="M1 0v8l4.500-4z" fill="currentColor" /></svg></button>
        </div>
        <svg class="w-[6px] h-[14px]" viewBox="0 0 6 14"><path d="M0 0h6v14h-1z" fill="#212830" /></svg>
        <a href="#model" class="bg-[#212830] text-white px-[5px]">Model</a>
        <svg class="w-[6px] h-[14px]" viewBox="0 0 6 14"><path d="M0 0h6L1 14H0z" fill="#212830" /></svg>
        <a href="#layout1" class="px-1">Layout1</a>
        <svg class="w-[6px] h-[14px]" viewBox="0 0 6 14"><path d="M5.500 0L1 14" stroke="#444" /></svg>
        <a href="#layout2" class="px-1">Layout2</a>
        <svg class="w-[6px] h-[14px]" viewBox="0 0 6 14"><path d="M5.500 0L1 14" stroke="#444" /></svg>
        <div class="ml-auto w-[410px] h-full flex items-center pl-[9px] pr-[21px] border-l border-[#bbb]">
          <svg class="w-[3px] h-[6px]" viewBox="0 0 3 6"><path d="M3 0v6L0 3z" fill="#222" /></svg>
          <span class="ml-auto mr-[14px] w-[13px] h-3 rounded-[2px] border border-[#999] bg-linear-to-b from-white to-[#ccc]"></span>
          <svg class="w-[3px] h-[6px]" viewBox="0 0 3 6"><path d="M0 0v6l3-3z" fill="#222" /></svg>
        </div>
      </nav>

      <!-- Status bar -->
      <footer class="h-[22px] border-t-2 border-b border-[#111] bg-linear-to-b from-[#8f8f8f] to-[#6c6c6c] flex text-[#161616] font-['Roboto',sans-serif] text-[11px] leading-[19px]">
        <span class="w-[156px] pl-[10px] border-r border-[#555] text-[10px]">25.1158, 11.8832, 0.0000</span>
        <div class="flex">
          <button class="w-[33px] border-r border-[#6a6a6a] bg-[#a3a3a3]">INFER</button>
          <button class="w-[30px] border-r border-[#6a6a6a] bg-[#a3a3a3]">SNAP</button>
          <button class="w-[30px] border-r border-[#6a6a6a] bg-[#a3a3a3]">GRID</button>
          <button class="w-[39px] border-r border-[#6a6a6a] bg-[#a3a3a3]">ORTHO</button>
          <button class="w-[37px] border-r border-[#6a6a6a] bg-[#a3a3a3]">POLAR</button>
          <button class="w-[38px] border-r border-[#6a6a6a] bg-[#9fd0dd]">OSNAP</button>
          <button class="w-[50px] border-r border-[#6a6a6a] bg-[#a3a3a3]">3DOSNAP</button>
          <button class="w-11 border-r border-[#6a6a6a] bg-[#9fd0dd]">OTRACK</button>
          <button class="w-[31px] border-r border-[#6a6a6a] bg-[#9fd0dd]">DUCS</button>
          <button class="w-[26px] border-r border-[#6a6a6a] bg-[#9fd0dd]">DYN</button>
          <button class="w-[26px] border-r border-[#6a6a6a] bg-[#a3a3a3]">LWT</button>
          <button class="w-6 border-r border-[#6a6a6a] bg-[#9fd0dd]">TPY</button>
          <button class="w-[18px] border-r border-[#6a6a6a] bg-[#a3a3a3]">QP</button>
          <button class="w-[18px] border-r border-[#6a6a6a] bg-[#a3a3a3]">SC</button>
          <button class="w-[19px] border-r border-[#6a6a6a] bg-[#a3a3a3]">AM</button>
        </div>
        <div class="ml-auto flex">
          <button class="w-[39px] border-r border-[#6a6a6a] bg-[#a3a3a3]">MODEL</button>
          <button aria-label="Quick view layouts" class="w-5 border-r border-[#6a6a6a] bg-[#a3a3a3] flex items-center justify-center"><svg class="w-[13px] h-[13px]" viewBox="0 0 13 13"><path d="M1 1h11v11H1z" fill="#fff" stroke="#333" /><path d="M3 3v6h6z" fill="#444" /></svg></button>
          <button aria-label="Quick view drawings" class="w-5 border-r border-[#6a6a6a] bg-[#a3a3a3] flex items-center justify-center"><svg class="w-[15px] h-[13px]" viewBox="0 0 15 13"><path d="M1 1h6v6H1zM8 1h6v6H8z" fill="#fff" stroke="#333" /><path d="M1 9h13v3H1z" fill="#eee" stroke="#333" /></svg></button>
          <button class="ml-[9px] w-[45px] border-x border-[#6a6a6a] bg-[#a3a3a3] flex items-center justify-center gap-px"><svg class="w-[14px] h-[14px]"><use href="#scaler" /></svg>1:1<svg class="w-[6px] h-1 ml-1"><use href="#caret" /></svg></button>
          <button aria-label="Annotation visibility" class="w-[19px] border-r border-[#6a6a6a] bg-[#a3a3a3] flex items-center justify-center"><svg class="w-4 h-4" viewBox="0 0 16 16"><use href="#scaler" /><circle cx="12" cy="11" r="2.800" fill="#ffd04a" stroke="#d0661a" /></svg></button>
          <button aria-label="Auto scale" class="w-[19px] border-r border-[#6a6a6a] bg-[#a3a3a3] flex items-center justify-center"><svg class="w-[14px] h-[14px] opacity-40"><use href="#scaler" /></svg></button>
          <button aria-label="Workspace switching" class="ml-[5px] w-5 border-x border-[#6a6a6a] bg-[#a3a3a3] flex items-center justify-center text-[#333]"><svg class="w-4 h-4"><use href="#gear" /></svg></button>
          <button aria-label="Toolbar lock" class="w-[19px] border-r border-[#6a6a6a] bg-[#a3a3a3] flex items-center justify-center"><svg class="w-[15px] h-[15px] [--lock:#eee]"><use href="#lock" /></svg></button>
          <button aria-label="Hardware acceleration" class="w-[19px] border-r border-[#6a6a6a] bg-[#a3a3a3] flex items-center justify-center"><svg class="w-[13px] h-[13px]" viewBox="0 0 13 13"><circle cx="6.500" cy="6.500" r="5.500" fill="#777" stroke="#999" /><path d="M3 4l3 4 4-5" stroke="#ccc" stroke-width="2" fill="none" /></svg></button>
          <button aria-label="Isolate objects" class="mx-[5px] my-px w-[22px] border border-[#555] bg-[#8a8a8a] flex items-center justify-center"><svg class="w-3 h-[15px]"><use href="#bulb" /></svg></button>
          <button aria-label="Status bar menu" class="w-[10px] flex items-center justify-center bg-[#a3a3a3]"><svg class="w-1 h-1"><use href="#caret" /></svg></button>
          <button aria-label="Clean screen" class="w-[19px] border-x border-[#6a6a6a] bg-[#a3a3a3] flex items-center justify-center"><svg class="w-[13px] h-[13px]" viewBox="0 0 13 13"><path d="M1 1h11v11H1z" fill="#f0f0f0" stroke="#333" /><path d="M1 1h11v2H1z" fill="#445" /></svg></button>
          <svg class="w-[13px] h-[13px] mt-[6px] ml-1" viewBox="0 0 13 13"><path d="M9 2h2v2H9zM5 6h2v2H5zM9 6h2v2H9zM1 10h2v2H1zM5 10h2v2H5zM9 10h2v2H9z" fill="#d5d0b8" /></svg>
        </div>
      </footer>
    </div>

    <!-- Window frame, right -->
    <div class="w-[10px] shrink-0 border-r-4 border-black bg-linear-to-r from-[#8c827f] to-[#3f3736]"></div>

    <!-- Canvas drawing: UCS icon, cross hairs, view cube -->
    <svg class="absolute left-0 top-0 w-[1200px] h-[630px] pointer-events-none font-['Open_Sans',sans-serif]" viewBox="0 0 1200 630">
      <g fill="none" stroke="#b9b9b9">
        <path d="M22.500 537v44M22.500 580.500h44M18.500 576.500h8v8h-8z" stroke-width="1.500" />
        <path d="M23 521l5.500 6 5.500-6M28.500 527v6M69 568l12 12M81 568l-12 12" />
        <path d="M602.500 328v62M572 358.500h61" stroke-width="1.200" />
        <path d="M599.500 355.500h6v6h-6z" />
      </g>
      <circle cx="1124" cy="228" r="32" fill="none" stroke="#454c54" stroke-width="7" />
      <path d="M1108 211h32v32h-32z" fill="#a4a6a8" />
      <path d="M1114 217h20v20h-20z" fill="#98a0a6" />
      <g fill="#b4b8bb" font-size="12" font-weight="700" text-anchor="middle" class="font-['Liberation_Sans',sans-serif]">
        <text x="1124" y="198">N</text><text x="1124" y="266">S</text><text x="1090" y="232">W</text><text x="1157" y="232">E</text>
      </g>
      <text x="1124" y="231" font-size="8" font-weight="700" fill="#3e464e" text-anchor="middle">TOP</text>
    </svg>

    <button class="absolute left-[1102px] top-[281px] w-[42px] h-[16px] rounded-[4px] border border-[#a8a8b4] bg-[#9a9aa6] text-[#62626c] font-['Liberation_Sans',sans-serif] leading-[14px] flex items-center justify-center gap-1">WCS<svg class="w-[7px] h-[5px]" viewBox="0 0 8 5"><path d="M.5.5h7L4 4.500z" fill="none" stroke="#c0c0ca" /></svg></button>

    <!-- Navigation bar -->
    <div class="absolute left-[1142px] top-[319px] w-7 h-[190px] rounded-[4px] bg-[#5b5f62] text-[#3e4347]">
      <svg class="w-7 h-[190px]" viewBox="0 0 28 190" fill="none" stroke="currentColor" stroke-width="1.300">
        <circle cx="23" cy="5" r="2.800" /><path d="M21.500 3.500l3 3M24.500 3.500l-3 3" stroke-width=".8" />
        <path d="M5 27a9 9 0 0 1 9-9h10v9a10 9 0 0 1-19 0z" /><circle cx="14" cy="27" r="6" />
        <path d="M12 44h4l-2 3z" fill="currentColor" stroke="none" />
        <path d="M4 50h20" stroke-width=".6" />
        <path d="M8 75c-3-4-5-6-4-8 2-1 3 1 5 3l-2-9c0-2 2-2 3 0l1 6v-9c1-2 3-1 3 0v9l2-8c1-1 3-1 2 1l-1 8 3-5c1-1 3 0 2 2l-4 8-2 3z" />
        <path d="M5 81l12 12M17 81L5 93M5 85v-4h4M13 81h4v4M5 89v4h4" /><circle cx="18" cy="92" r="4.500" /><path d="M21 95l4 4" stroke-width="2.500" />
        <path d="M12 107h4l-2 3zM12 141h4l-2 3z" fill="currentColor" stroke="none" />
        <ellipse cx="14" cy="125" rx="10" ry="3.500" /><path d="M12 134v-14h-2l4-5 4 5h-2v14zM5 128l4-3v6z" />
        <path d="M4 150h20" stroke-width=".6" />
        <path d="M4 152h5v5H4zM11 152h5v5h-5zM18 152h5v5h-5zM4 161h14v11H4z" /><path d="M9 163v7l5-3.500z" fill="currentColor" />
        <circle cx="23" cy="184" r="2.800" />
      </svg>
    </div>

    <!-- Command line -->
    <form class="absolute left-[222px] top-[535px] w-[708px] h-[24px] flex items-center border border-[#777] bg-[#4b4b4b]">
      <svg class="w-[6px] h-4 ml-[3px]" viewBox="0 0 6 16"><path d="M1.500 0v16M4.500 0v16" stroke="#aaa" stroke-dasharray="1.500 1.500" stroke-width="1.500" /></svg>
      <button type="button" aria-label="Close command line" class="ml-[3px]"><svg class="w-[9px] h-[9px]" viewBox="0 0 9 9"><path d="M1 1l7 7M8 1L1 8" stroke="#ccc" stroke-width="1.800" /></svg></button>
      <button type="button" aria-label="Customize" class="ml-[9px]"><svg class="w-[13px] h-[13px]" viewBox="0 0 13 13"><path d="M5.500 5.500l6 6" stroke="#c4cad0" stroke-width="2.500" stroke-linecap="round" /><path d="M1 3a3.500 3.500 0 1 0 3-2l1 2-2 2z" fill="#c4cad0" /></svg></button>
      <label class="ml-[3px] flex-1 h-full flex items-center bg-[#bfc0c1] pl-1 gap-[3px]">
        <svg class="w-[14px] h-[14px]" viewBox="0 0 14 14"><path d="M.5.500h13v13H.500z" fill="#a7b0b8" stroke="#7a848e" /><path d="M3 3.500L6.500 7 3 10.500M7 10.500h4" fill="none" stroke="#2f3f55" stroke-width="1.400" /></svg>
        <svg class="w-[5px] h-[3px] text-[#777]"><use href="#caret" /></svg>
        <input type="text" aria-label="Command" placeholder="Type a command" class="flex-1 bg-transparent ml-[3px] outline-none italic font-['DejaVu_Sans_Mono',monospace] text-[10px] placeholder:text-[#7b7b7b]" />
        <svg class="w-[6px] h-1 mr-[3px] rotate-180 text-[#222]"><use href="#caret" /></svg>
      </label>
    </form>

    <!-- Callouts -->
    <div class="absolute inset-0 pointer-events-none font-['Lato',sans-serif] font-bold text-white text-[21px] leading-[27px] whitespace-pre">
      <div class="absolute left-[15px] top-[219px] w-[203px] h-[36px] pl-[9px] pt-[5px] bg-linear-to-b from-[#8457ad] to-[#6d4295] shadow-[inset_0_2px_1px_#a17fc6,inset_-2px_-2px_2px_#54307a]">Application Menu</div>
      <div class="absolute left-[241px] top-[225px] w-[250px] h-[36px] pl-2 pt-[5px] bg-linear-to-b from-[#9bc048] to-[#84a934] shadow-[inset_0_2px_1px_#bcdc78,inset_-2px_-2px_2px_#6c8c26]">Quick Access Toolbar</div>
      <div class="absolute left-[582px] top-[213px] w-[169px] h-[42px] pl-2 pt-[7px] text-[25px] bg-linear-to-b from-[#4079c4] to-[#2f5f9f] shadow-[inset_0_2px_1px_#76a4df,inset_-2px_-2px_2px_#224a80]">Ribbon  Bar</div>
      <div class="absolute left-[789px] top-[207px] w-[145px] h-[36px] pl-2 pt-[5px] bg-linear-to-b from-[#d34a48] to-[#b43533] shadow-[inset_0_2px_1px_#ec8684,inset_-2px_-2px_2px_#8e2523]">Search  Bar</div>
      <div class="absolute left-[397px] top-[322px] w-[147px] h-[38px] pl-[5px] pt-[3px] border-[3px] border-[#35a0bc] bg-white text-black">Cross Hairs</div>
      <div class="absolute left-[910px] top-[317px] w-[217px] h-[60px] pl-[7px] pt-1 text-[18px] leading-[24px] border-2 border-[#644a86] bg-[#8064a2]">World  <span class="text-[21px]">coordinate</span>
system</div>
      <div class="absolute left-[21px] top-[392px] w-[192px] h-[65px] pl-2 pt-[5px] bg-radial from-[#5b80d8] to-[#1e3a80] shadow-[inset_0_2px_2px_#3d5ba6,inset_-2px_-2px_3px_#10265c]">User coordinate
system</div>
      <div class="absolute left-[362px] top-[437px] w-[249px] h-[42px] pl-2 pt-[8px] text-[25px] bg-linear-to-b from-[#ff9a38] to-[#e67f22] shadow-[inset_0_3px_1px_#ffc35e,inset_-2px_-2px_2px_#ab5a16]">Command Window</div>
      <div class="absolute left-[876px] top-[479px] w-[146px] h-[42px] pl-[7px] pt-[7px] text-[25px] bg-linear-to-b from-[#38b0d2] to-[#2690b2] shadow-[inset_0_2px_1px_#74d0e8,inset_-2px_-2px_2px_#1c7390]">Status  Bar</div>
    </div>

    <!-- Callout arrows -->
    <svg class="absolute left-0 top-0 w-[1200px] h-[630px] pointer-events-none" viewBox="0 0 1200 630" fill="none">
      <g stroke="#fe0000" stroke-width="5">
        <path d="M97.500 228V127H22.500V36" stroke-width="4" />
        <path d="M201.500 18V122H340.500V220" />
        <path d="M457 116H516.500V237.500H577" />
        <path d="M808 14V107H854V202" />
        <path d="M456 480V508.500H473V536" />
        <path d="M642 618.500H759V502.500H876" />
      </g>
      <g stroke="#fe0000" stroke-width="6" stroke-linecap="round">
        <path d="M16 44.500l6.500-9.500 6.500 9.500" stroke-width="5" />
        <path d="M193.500 31.500l8-13.500 8 13.500M332.500 207.500l8 13.500 8-13.500M470 108l-13 8 13 8M564 229.500l13 8-13 8M800 27l8-13.500 8 13.500M846 188.500l8 13.500 8-13.500M448 493.500l8-13.500 8 13.500M465 522.500l8 13.500 8-13.500M655 610.500l-13 8 13 8M863 494.500l13 8-13 8" />
      </g>
      <g stroke="#fff" stroke-width="4">
        <path d="M1102 249L1022 316M602 358L545 347M35 571L106 462" />
        <path d="M1022 309l-2 8 8-1M552 341l-9 6 8 8M96 468l11-7-1 12" stroke-width="4" stroke-linecap="round" />
      </g>
    </svg>
  </div>
</body>
</html>
